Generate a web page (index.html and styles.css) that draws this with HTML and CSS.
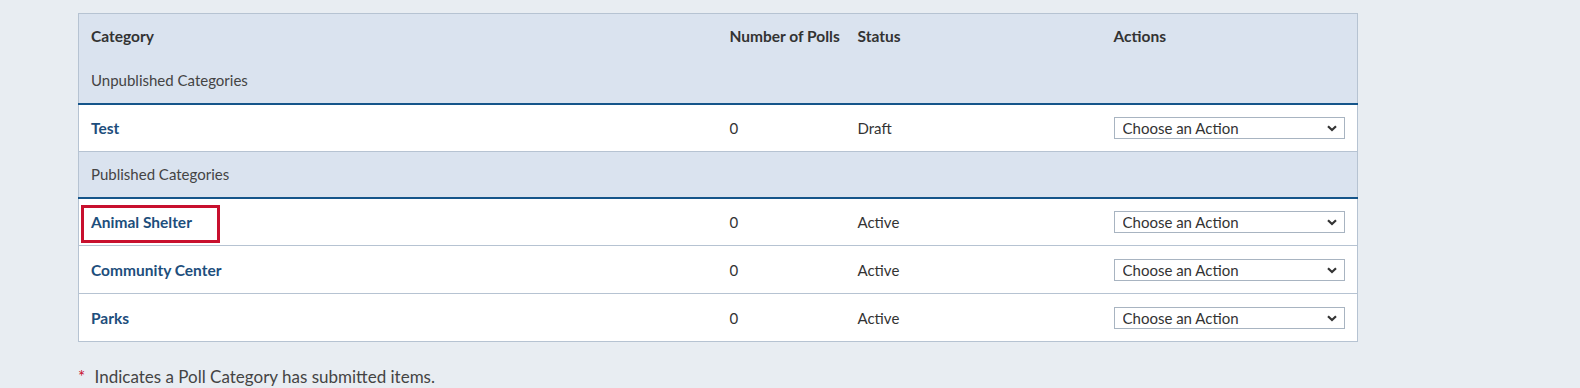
FILE: index.html
```html
<!DOCTYPE html>
<html>
<head>
	<meta charset="UTF-8">
	<title>Poll Categories</title>
	<link rel="stylesheet" href="styles.css">
</head>
<body>
<div class="page">
	<table class="grid">
		<thead>
			<tr>
				<th class="c-name">Category</th>
				<th class="c-num">Number of Polls</th>
				<th class="c-status">Status</th>
				<th class="c-act">Actions</th>
			</tr>
		</thead>
		<tbody>
			<tr class="group"><td colspan="4">Unpublished Categories</td></tr>
			<tr>
				<td><a href="#">Test</a></td>
				<td>0</td>
				<td>Draft</td>
				<td>
					<span class="pick">
						<select><option>Choose an Action</option></select>
						<svg class="chev" width="10" height="7" viewBox="0 0 10 7"><path d="M1 1.2 L5 5 L9 1.2" fill="none" stroke="#333" stroke-width="2.2"/></svg>
					</span>
				</td>
			</tr>
			<tr class="group"><td colspan="4">Published Categories</td></tr>
			<tr>
				<td><a href="#" class="marked">Animal Shelter</a></td>
				<td>0</td>
				<td>Active</td>
				<td>
					<span class="pick">
						<select><option>Choose an Action</option></select>
						<svg class="chev" width="10" height="7" viewBox="0 0 10 7"><path d="M1 1.2 L5 5 L9 1.2" fill="none" stroke="#333" stroke-width="2.2"/></svg>
					</span>
				</td>
			</tr>
			<tr>
				<td><a href="#">Community Center</a></td>
				<td>0</td>
				<td>Active</td>
				<td>
					<span class="pick">
						<select><option>Choose an Action</option></select>
						<svg class="chev" width="10" height="7" viewBox="0 0 10 7"><path d="M1 1.2 L5 5 L9 1.2" fill="none" stroke="#333" stroke-width="2.2"/></svg>
					</span>
				</td>
			</tr>
			<tr>
				<td><a href="#">Parks</a></td>
				<td>0</td>
				<td>Active</td>
				<td>
					<span class="pick">
						<select><option>Choose an Action</option></select>
						<svg class="chev" width="10" height="7" viewBox="0 0 10 7"><path d="M1 1.2 L5 5 L9 1.2" fill="none" stroke="#333" stroke-width="2.2"/></svg>
					</span>
				</td>
			</tr>
		</tbody>
	</table>
	<p class="note"><span class="star">*</span> Indicates a Poll Category has submitted items.</p>
</div>
</body>
</html>
```

FILE: styles.css
```css
*{
	box-sizing: border-box;
}
body{
	margin: 0;
	background-color: #e8edf2;
	font-family: Lato, "Open Sans", sans-serif;
	font-size: 15px;
	color: #333;
}
.page{
	padding: 13px 0 0 78px;
}
.grid{
	width: 1280px;
	table-layout: fixed;
	border-collapse: collapse;
	border: 1px solid #b6c3d2;
	background-color: #fff;
}
.grid th{
	background-color: #dae3ef;
	text-align: left;
	font-weight: bold;
	font-size: 15.5px;
	height: 44px;
	padding: 0 12px;
	color: #333;
	white-space: nowrap;
}
.grid td{
	height: 48px;
	padding: 0 12px;
	border-bottom: 1px solid #b6c3d2;
}
.c-name{ width: 639px; }
.c-num{ width: 128px; }
.c-status{ width: 256px; }
.grid tr.group td{
	background-color: #dae3ef;
	border-bottom: 2px solid #15558a;
	height: 46px;
	color: #444;
}
.grid a{
	color: #1d4e7c;
	font-weight: bold;
	font-size: 15.5px;
	text-decoration: none;
}
.marked{
	position: relative;
}
.marked::after{
	content: "";
	position: absolute;
	left: -10px;
	right: -28px;
	top: -8px;
	bottom: -12px;
	border: 3px solid #c8102e;
}
.pick{
	position: relative;
	display: inline-block;
	vertical-align: middle;
}
.pick select{
	-webkit-appearance: none;
	appearance: none;
	width: 231px;
	height: 22px;
	border: 1px solid #a8b4c1;
	background-color: #fff;
	font-family: Lato, "Open Sans", sans-serif;
	font-size: 15px;
	color: #333;
	padding: 0 0 0 8px;
	border-radius: 0;
	display: block;
}
.chev{
	position: absolute;
	right: 8px;
	top: 8px;
	pointer-events: none;
}
.note{
	margin: 24px 0 0 0;
	font-size: 17px;
	color: #444;
}
.star{
	color: #c8102e;
	margin-right: 5px;
}
```
